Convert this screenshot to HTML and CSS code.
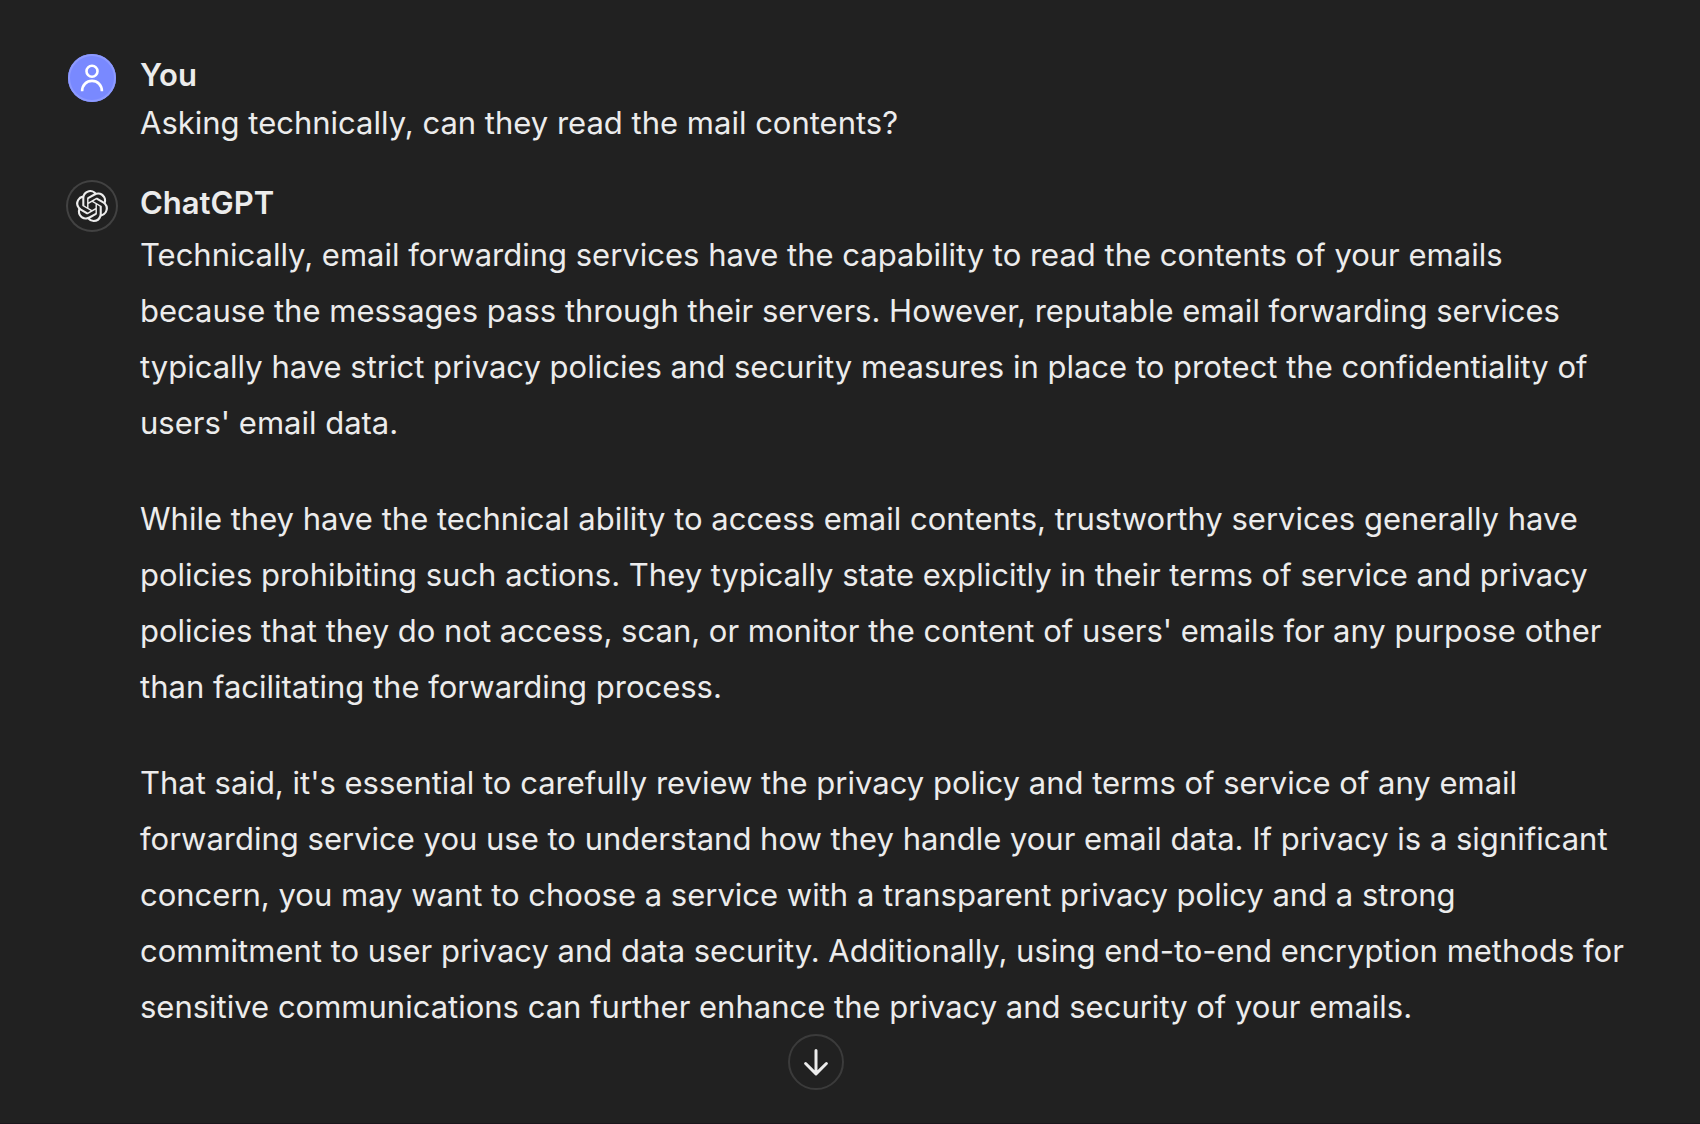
FILE: index.html
```html
<!DOCTYPE html>
<html lang="en">
<head>
<meta charset="utf-8">
<meta name="viewport" content="width=device-width, initial-scale=1">
<title>ChatGPT</title>
<link rel="stylesheet" href="styles.css">
</head>
<body>
<main class="chat">
  <article class="message">
    <div class="avatar avatar-user">
      <svg viewBox="0 0 48 48" fill="none" stroke="currentColor" stroke-width="2.6" stroke-linecap="butt" aria-hidden="true">
        <circle cx="24" cy="17.3" r="5.5"/>
        <path d="M14.1 37.2C14.1 31 18.5 26.9 24 26.9S33.9 31 33.9 37.2"/>
      </svg>
    </div>
    <div class="body">
      <h2 class="author">You</h2>
      <p>Asking technically, can they read the mail contents?</p>
    </div>
  </article>

  <article class="message">
    <div class="avatar avatar-bot">
      <svg viewBox="0 0 24 24" fill="currentColor" aria-hidden="true">
        <path d="M22.2819 9.8211a5.9847 5.9847 0 0 0-.5157-4.9108 6.0462 6.0462 0 0 0-6.5098-2.9A6.0651 6.0651 0 0 0 4.9807 4.1818a5.9847 5.9847 0 0 0-3.9977 2.9 6.0462 6.0462 0 0 0 .7427 7.0966 5.98 5.98 0 0 0 .511 4.9107 6.051 6.051 0 0 0 6.5146 2.9001A5.9847 5.9847 0 0 0 13.2599 24a6.0557 6.0557 0 0 0 5.7718-4.2058 5.9894 5.9894 0 0 0 3.9977-2.9001 6.0557 6.0557 0 0 0-.7475-7.0729zm-9.022 12.6081a4.4755 4.4755 0 0 1-2.8764-1.0408l.1419-.0804 4.7783-2.7582a.7948.7948 0 0 0 .3927-.6813v-6.7369l2.02 1.1686a.071.071 0 0 1 .038.052v5.5826a4.504 4.504 0 0 1-4.4945 4.4944zm-9.6607-4.1254a4.4708 4.4708 0 0 1-.5346-3.0137l.142.0852 4.783 2.7582a.7712.7712 0 0 0 .7806 0l5.8428-3.3685v2.3324a.0804.0804 0 0 1-.0332.0615L9.74 19.9502a4.4992 4.4992 0 0 1-6.1408-1.6464zM2.3408 7.8956a4.485 4.485 0 0 1 2.3655-1.9728V11.6a.7664.7664 0 0 0 .3879.6765l5.8144 3.3543-2.0201 1.1685a.0757.0757 0 0 1-.071 0l-4.8303-2.7865A4.504 4.504 0 0 1 2.3408 7.872zm16.5963 3.8558L13.1038 8.364 15.1192 7.2a.0757.0757 0 0 1 .071 0l4.8303 2.7913a4.4944 4.4944 0 0 1-.6765 8.1042v-5.6772a.79.79 0 0 0-.407-.667zm2.0107-3.0231l-.142-.0852-4.7735-2.7818a.7759.7759 0 0 0-.7854 0L9.409 9.2297V6.8974a.0662.0662 0 0 1 .0284-.0615l4.8303-2.7866a4.4992 4.4992 0 0 1 6.6802 4.66zM8.3065 12.863l-2.02-1.1638a.0804.0804 0 0 1-.038-.0567V6.0742a4.4992 4.4992 0 0 1 7.3757-3.4537l-.142.0805L8.704 5.459a.7948.7948 0 0 0-.3927.6813zm1.0976-2.3654l2.602-1.4998 2.6069 1.4998v2.9994l-2.5974 1.4997-2.6067-1.4997Z"/>
      </svg>
    </div>
    <div class="body">
      <h2 class="author">ChatGPT</h2>
      <div class="reply">
        <p>Technically, email forwarding services have the capability to read the contents of your emails<br>
        because the messages pass through their servers. However, reputable email forwarding services<br>
        typically have strict privacy policies and security measures in place to protect the confidentiality of<br>
        users' email data.</p>
        <p>While they have the technical ability to access email contents, trustworthy services generally have<br>
        policies prohibiting such actions. They typically state explicitly in their terms of service and privacy<br>
        policies that they do not access, scan, or monitor the content of users' emails for any purpose other<br>
        than facilitating the forwarding process.</p>
        <p>That said, it's essential to carefully review the privacy policy and terms of service of any email<br>
        forwarding service you use to understand how they handle your email data. If privacy is a significant<br>
        concern, you may want to choose a service with a transparent privacy policy and a strong<br>
        commitment to user privacy and data security. Additionally, using end-to-end encryption methods for<br>
        sensitive communications can further enhance the privacy and security of your emails.</p>
      </div>
    </div>
  </article>

  <button class="scroll-down" type="button" aria-label="Scroll to bottom">
    <svg viewBox="0 0 52 52" fill="none" stroke="currentColor" stroke-width="3" stroke-linecap="round" stroke-linejoin="round" aria-hidden="true">
      <path d="M26 14.5V37.5M15.6 27.5L26 37.9L36.4 27.5"/>
    </svg>
  </button>
</main>
</body>
</html>
```
FILE: styles.css
```css
* {
  box-sizing: border-box;
}

body {
  margin: 0;
  background: #212121;
  color: #ececec;
  font-family: Inter, "Liberation Sans", sans-serif;
  font-size: 31px;
  line-height: 56px;
}

.chat {
  display: flex;
  flex-direction: column;
  min-height: 100vh;
  padding: 54px 68px 32px;
  border-bottom: 1px solid #1c161c;
}

.message {
  display: flex;
  gap: 24px;
}

.message + .message {
  margin-top: 31px;
}

.avatar {
  display: flex;
  flex: none;
  align-items: center;
  justify-content: center;
  width: 48px;
  height: 48px;
  border-radius: 50%;
}

.avatar-user {
  background: #7989ff;
  color: #fff;
  box-shadow: inset 0 0 0 2px #8d9aff;
}

.avatar-user svg {
  width: 48px;
  height: 48px;
}

.avatar-bot {
  box-shadow: 0 0 0 2px #424242;
}

.avatar-bot svg {
  width: 32px;
  height: 32px;
}

.body {
  flex: 1;
  min-width: 0;
  padding-top: 1px;
}

.author {
  margin: 0;
  font-size: 31px;
  font-weight: 600;
  line-height: 40px;
}

p {
  margin: 0;
}

.reply {
  display: flex;
  flex-direction: column;
  gap: 40px;
  padding-top: 4px;
}

.scroll-down {
  display: flex;
  align-self: center;
  width: 56px;
  height: 56px;
  margin: -1px 68px 0 0;
  padding: 0;
  border: 2px solid #3b3b3b;
  border-radius: 50%;
  background: #212121;
  color: #ececec;
}

.scroll-down svg {
  width: 52px;
  height: 52px;
}
```
